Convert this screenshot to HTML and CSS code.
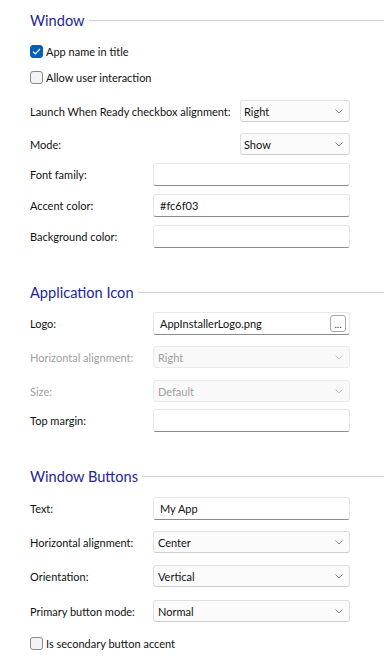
FILE: index.html
```html
<!DOCTYPE html>
<html lang="en">
<head>
    <meta charset="UTF-8">
    <meta name="viewport" content="width=device-width, initial-scale=1.0">
    <title>Installer Settings</title>
    <link rel="stylesheet" href="styles.css">
</head>
<body>
    <div class="panel">
        <div class="section-header first">
            <span class="section-title">Window</span>
            <span class="section-line"></span>
        </div>

        <label class="check-row cb-first">
            <span class="checkbox checked">
                <svg width="9" height="7" viewBox="0 0 9 7"><path d="M1 3.6 L3.3 5.8 L8 1" fill="none" stroke="#fff" stroke-width="1.2"/></svg>
            </span>
            App name in title
        </label>
        <label class="check-row cb-next">
            <span class="checkbox"></span>
            Allow user interaction
        </label>

        <div class="row sel-row gap-16">
            <span class="label">Launch When Ready checkbox alignment:</span>
            <div class="select narrow"><span>Right</span><svg class="chev" width="8" height="5" viewBox="0 0 8 5"><path d="M0.5 0.5 L4 4 L7.5 0.5" fill="none" stroke="#8a8a8a"/></svg></div>
        </div>
        <div class="row sel-row gap-11">
            <span class="label">Mode:</span>
            <div class="select narrow"><span>Show</span><svg class="chev" width="8" height="5" viewBox="0 0 8 5"><path d="M0.5 0.5 L4 4 L7.5 0.5" fill="none" stroke="#8a8a8a"/></svg></div>
        </div>
        <div class="row in-row gap-8">
            <span class="label">Font family:</span>
            <div class="input"></div>
        </div>
        <div class="row in-row gap-8">
            <span class="label">Accent color:</span>
            <div class="input">#fc6f03</div>
        </div>
        <div class="row in-row gap-8">
            <span class="label">Background color:</span>
            <div class="input"></div>
        </div>

        <div class="section-header">
            <span class="section-title">Application Icon</span>
            <span class="section-line"></span>
        </div>

        <div class="row in-row gap-8">
            <span class="label">Logo:</span>
            <div class="input">AppInstallerLogo.png<span class="browse">...</span></div>
        </div>
        <div class="row sel-row gap-11 disabled">
            <span class="label">Horizontal alignment:</span>
            <div class="select wide"><span>Right</span><svg class="chev" width="8" height="5" viewBox="0 0 8 5"><path d="M0.5 0.5 L4 4 L7.5 0.5" fill="none" stroke="#c4c4c4"/></svg></div>
        </div>
        <div class="row sel-row gap-12 disabled">
            <span class="label">Size:</span>
            <div class="select wide"><span>Default</span><svg class="chev" width="8" height="5" viewBox="0 0 8 5"><path d="M0.5 0.5 L4 4 L7.5 0.5" fill="none" stroke="#c4c4c4"/></svg></div>
        </div>
        <div class="row in-row gap-7">
            <span class="label">Top margin:</span>
            <div class="input"></div>
        </div>

        <div class="section-header">
            <span class="section-title">Window Buttons</span>
            <span class="section-line"></span>
        </div>

        <div class="row in-row gap-9">
            <span class="label">Text:</span>
            <div class="input">My App</div>
        </div>
        <div class="row sel-row gap-11">
            <span class="label">Horizontal alignment:</span>
            <div class="select wide"><span>Center</span><svg class="chev" width="8" height="5" viewBox="0 0 8 5"><path d="M0.5 0.5 L4 4 L7.5 0.5" fill="none" stroke="#8a8a8a"/></svg></div>
        </div>
        <div class="row sel-row gap-12">
            <span class="label">Orientation:</span>
            <div class="select wide"><span>Vertical</span><svg class="chev" width="8" height="5" viewBox="0 0 8 5"><path d="M0.5 0.5 L4 4 L7.5 0.5" fill="none" stroke="#8a8a8a"/></svg></div>
        </div>
        <div class="row sel-row gap-13">
            <span class="label">Primary button mode:</span>
            <div class="select wide"><span>Normal</span><svg class="chev" width="8" height="5" viewBox="0 0 8 5"><path d="M0.5 0.5 L4 4 L7.5 0.5" fill="none" stroke="#8a8a8a"/></svg></div>
        </div>

        <label class="check-row cb-last">
            <span class="checkbox"></span>
            Is secondary button accent
        </label>
    </div>
</body>
</html>
```

FILE: styles.css
```css
body {
    margin: 0;
    background: #ffffff;
    font-family: Lato, "Noto Sans", sans-serif;
    font-size: 11px;
    color: #111111;
}
.panel {
    padding: 0 34px 0 30px;
}
.section-header {
    display: flex;
    align-items: center;
    height: 24px;
    margin-top: 32px;
    margin-right: -34px;
}
.section-header.first {
    margin-top: 8px;
}
.section-title {
    font-size: 14.6px;
    color: #25259a;
    white-space: nowrap;
}
.section-line {
    flex: 1;
    height: 1px;
    background: #cfcfcf;
    margin-left: 4px;
}
.check-row {
    display: flex;
    align-items: center;
    height: 14px;
}
.cb-first { margin-top: 12px; }
.cb-next { margin-top: 12px; }
.cb-last { margin-top: 14px; }
.checkbox {
    width: 11px;
    height: 11px;
    border: 1px solid #8a8a8a;
    border-radius: 3px;
    background: #f3f3f3;
    margin-right: 3px;
    display: flex;
    align-items: center;
    justify-content: center;
}
.checkbox.checked {
    background: #005fb8;
    border-color: #005fb8;
}
.row {
    display: flex;
    align-items: center;
    justify-content: space-between;
}
.label {
    white-space: nowrap;
}
.sel-row { height: 22px; }
.in-row { height: 23px; }
.gap-7 { margin-top: 7px; }
.gap-8 { margin-top: 8px; }
.gap-9 { margin-top: 9px; }
.gap-11 { margin-top: 11px; }
.gap-12 { margin-top: 12px; }
.gap-13 { margin-top: 13px; }
.gap-16 { margin-top: 16px; }
.select {
    box-sizing: border-box;
    flex-shrink: 0;
    height: 22px;
    display: flex;
    align-items: center;
    justify-content: space-between;
    padding: 0 6px 0 3px;
    border: 1px solid #e0e0e0;
    border-bottom-color: #cfcfcf;
    border-radius: 3px;
    background: #fbfbfb;
}
.select.narrow { width: 110px; }
.select.wide { width: 197px; padding-left: 4px; }
.input {
    box-sizing: border-box;
    flex-shrink: 0;
    width: 197px;
    height: 23px;
    display: flex;
    align-items: center;
    justify-content: space-between;
    padding: 0 3px 0 6px;
    border: 1px solid #e8e8e8;
    border-bottom: 1px solid #8a8a8a;
    border-radius: 3px;
    background: #ffffff;
}
.browse {
    box-sizing: border-box;
    width: 16px;
    height: 17px;
    border: 1px solid #a8a8a8;
    border-radius: 3px;
    font-size: 10px;
    line-height: 17px;
    text-align: center;
    color: #333;
}
.disabled .label,
.disabled .select span {
    color: #a0a0a0;
}
.disabled .select {
    background: #f9f9f9;
    border-color: #ebebeb;
}
```
